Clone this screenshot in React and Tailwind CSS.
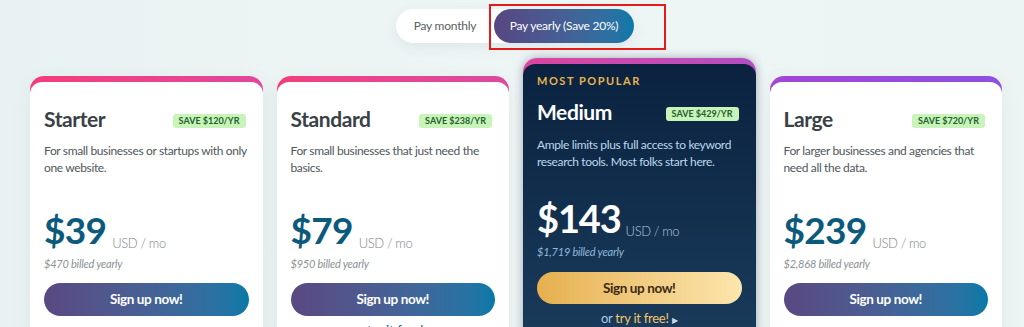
import React from 'react';

const plans = [
  {
    name: 'Starter',
    save: 'SAVE $120/YR',
    desc: 'For small businesses or startups with only one website.',
    price: '$39',
    billed: '$470 billed yearly',
    bar: 'bg-gradient-to-r from-[#f43c7b] to-[#e0479c]',
  },
  {
    name: 'Standard',
    save: 'SAVE $238/YR',
    desc: 'For small businesses that just need the basics.',
    price: '$79',
    billed: '$950 billed yearly',
    bar: 'bg-gradient-to-r from-[#f23e7e] to-[#da4aa2]',
    trial: true,
  },
  {
    name: 'Medium',
    save: 'SAVE $429/YR',
    desc: 'Ample limits plus full access to keyword research tools. Most folks start here.',
    price: '$143',
    billed: '$1,719 billed yearly',
    popular: true,
  },
  {
    name: 'Large',
    save: 'SAVE $720/YR',
    desc: 'For larger businesses and agencies that need all the data.',
    price: '$239',
    billed: '$2,868 billed yearly',
    bar: 'bg-gradient-to-r from-[#a246d6] to-[#8d4fe2]',
  },
];

const Badge = ({ children }) => (
  <span className="mr-[3px] mt-[3px] flex h-[14px] items-center rounded-[3px] bg-[#c8f4b9] px-[6px] text-[9px] font-bold leading-none tracking-normal text-[#23602e]">
    {children}
  </span>
);

const PlanCard = ({ plan }) => (
  <div className={`mt-[18px] w-[232.5px] shrink-0 rounded-t-[14px] pt-[6px] shadow-[0_6px_22px_rgba(20,60,70,0.06)] ${plan.bar}`}>
    <div className="min-h-[300px] rounded-t-[12px] bg-white px-[14px] pt-[23px]">
      <div className="flex h-[28px] items-center justify-between">
        <h3 className="text-[21px] font-bold leading-[28px] tracking-[-0.02em] text-[#3a4146]">{plan.name}</h3>
        <Badge>{plan.save}</Badge>
      </div>
      <p className="mt-[9px] h-[34px] text-[12px] leading-[17px] tracking-[-0.03em] text-[#50565b]">{plan.desc}</p>
      <div className="mt-[32px] flex h-[44px] items-end">
        <span className="text-[37px] font-bold leading-[44px] tracking-[-0.02em] text-[#0b5a7c]">{plan.price}</span>
        <span className="ml-[6px] text-[13px] font-light leading-[18px] tracking-[-0.03em] text-[#7f858a]">USD / mo</span>
      </div>
      <p className="mt-[5px] text-[11px] italic leading-[14px] tracking-[-0.02em] text-[#8b9094]">{plan.billed}</p>
      <button className="mt-[12px] flex h-[33px] w-full items-center justify-center rounded-full bg-gradient-to-r from-[#5a4882] to-[#0479a9] text-[13.5px] font-bold tracking-[-0.03em] text-white">
        Sign up now!
      </button>
      {plan.trial && (
        <p className="mt-[6px] text-center text-[13px] leading-[16px] text-[#3a4146]">
          or <span className="text-[#0b5a7c]">try it free!</span> ▸
        </p>
      )}
    </div>
  </div>
);

const PopularCard = ({ plan }) => (
  <div className="w-[232.5px] shrink-0 rounded-t-[14px] bg-gradient-to-r from-[#dc44a0] to-[#b24ec2] pt-[6px] shadow-[0_0_10px_rgba(12,35,64,0.35)]">
    <div className="min-h-[320px] rounded-t-[12px] bg-gradient-to-b from-[#0a223f] to-[#1d3f60] px-[14px] pt-[10px]">
      <p className="text-[11px] font-bold leading-[14px] tracking-[0.14em] text-[#e9b24f]">MOST POPULAR</p>
      <div className="mt-[10px] flex h-[28px] items-center justify-between">
        <h3 className="text-[21px] font-bold leading-[28px] tracking-[-0.02em] text-white">{plan.name}</h3>
        <Badge>{plan.save}</Badge>
      </div>
      <p className="mt-[10px] h-[34px] text-[12px] leading-[17px] tracking-[-0.03em] text-[#bcd8ec]">{plan.desc}</p>
      <div className="mt-[26px] flex h-[44px] items-end">
        <span className="text-[38px] font-bold leading-[44px] tracking-[-0.03em] text-white">{plan.price}</span>
        <span className="ml-[5px] text-[13px] font-light leading-[18px] tracking-[-0.03em] text-[#a9c8df]">USD / mo</span>
      </div>
      <p className="mt-[5px] text-[11px] italic leading-[14px] tracking-[-0.02em] text-[#8fb9d8]">{plan.billed}</p>
      <button className="mt-[13px] flex h-[32px] w-full items-center justify-center rounded-full bg-gradient-to-r from-[#e5b04d] to-[#fde6ad] text-[13.5px] font-bold tracking-[-0.03em] text-[#3b2a12]">
        Sign up now!
      </button>
      <p className="mt-[6px] text-center text-[13px] leading-[16px] tracking-[-0.02em] text-[#a9cbe6]">
        or <span className="text-[#f2c56a]">try it free!</span>{' '}
        <span className="text-[8px] text-[#c8d8e6]">▶</span>
      </p>
    </div>
  </div>
);

export default function App() {
  return (
    <div className="relative h-[327px] overflow-hidden bg-gradient-to-r from-[#e9f2f2] via-[#eef5f5] to-[#edf4f4] font-['Lato',sans-serif]">
      {/* Billing toggle */}
      <div className="flex justify-center pl-[6px] pt-[9px]">
        <div className="flex h-[34px] rounded-full bg-white shadow-[0_4px_14px_rgba(20,60,70,0.07)]">
          <button className="w-[98px] text-[12px] tracking-[-0.02em] text-[#5a5f63]">Pay monthly</button>
          <button className="w-[140px] rounded-full bg-gradient-to-r from-[#574682] to-[#0879a9] text-[12px] tracking-[-0.02em] text-white">
            Pay yearly (Save 20%)
          </button>
        </div>
      </div>

      {/* Highlight box */}
      <div className="pointer-events-none absolute left-[489px] top-[4px] h-[46px] w-[177px] border-2 border-[#e31b1b]" />

      {/* Plans */}
      <div className="mt-[15px] flex items-start gap-[14px] pl-[30px]">
        {plans.map((p) =>
          p.popular ? <PopularCard key={p.name} plan={p} /> : <PlanCard key={p.name} plan={p} />
        )}
      </div>
    </div>
  );
}
